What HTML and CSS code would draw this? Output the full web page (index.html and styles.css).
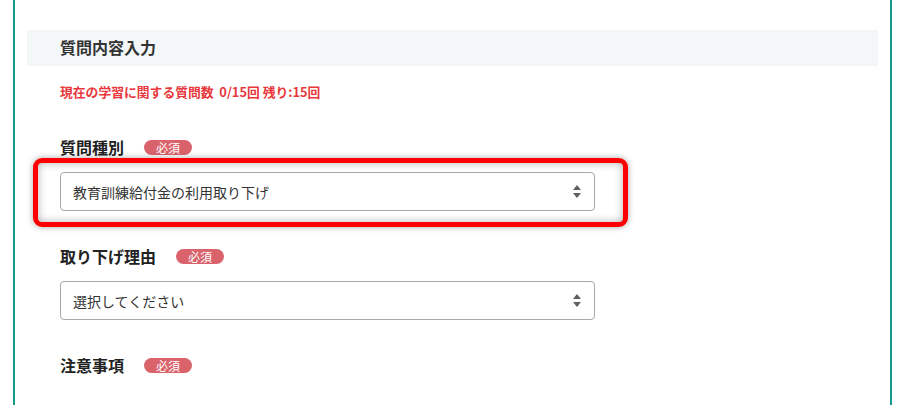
FILE: index.html
```html
<!DOCTYPE html>
<html lang="ja">
<head>
<meta charset="utf-8">
<title>質問内容入力</title>
<link rel="stylesheet" href="styles.css">
</head>
<body>
<div class="panel">
  <div class="section-head">質問内容入力</div>
  <div class="form">
    <p class="count">現在の学習に関する質問数&nbsp;&nbsp;0/15回 残り:15回</p>
    <div class="field">
      <div class="label-row"><span class="label">質問種別</span><span class="badge">必須</span></div>
      <div class="select-wrap">
        <div class="select">教育訓練給付金の利用取り下げ
          <svg class="arrows" width="8" height="13" viewBox="0 0 8 13"><path d="M4 0 L8 5 L0 5 Z" fill="#5f5f5f"/><path d="M0 8 L8 8 L4 13 Z" fill="#5f5f5f"/></svg>
        </div>
        <div class="highlight"></div>
      </div>
    </div>
    <div class="field">
      <div class="label-row"><span class="label">取り下げ理由</span><span class="badge">必須</span></div>
      <div class="select">選択してください
        <svg class="arrows" width="8" height="13" viewBox="0 0 8 13"><path d="M4 0 L8 5 L0 5 Z" fill="#5f5f5f"/><path d="M0 8 L8 8 L4 13 Z" fill="#5f5f5f"/></svg>
      </div>
    </div>
    <div class="field">
      <div class="label-row"><span class="label">注意事項</span><span class="badge">必須</span></div>
    </div>
  </div>
</div>
</body>
</html>
```

FILE: styles.css
```css
html, body {
  margin: 0;
  padding: 0;
  background: #fff;
}
body {
  font-family: "Noto Sans CJK JP", "Noto Sans", sans-serif;
  color: #333;
  height: 405px;
  overflow: hidden;
}
.panel {
  margin-left: 13px;
  width: 879px;
  box-sizing: border-box;
  border-left: 2px solid #14998a;
  border-right: 2px solid #14998a;
  padding: 30px 12px 40px;
  min-height: 460px;
}
.section-head {
  background: #f3f7f8;
  height: 36px;
  line-height: 34px;
  padding-left: 33px;
  font-size: 16px;
  font-weight: bold;
  color: #333;
}
.form {
  padding-left: 33px;
}
.count {
  margin: 16px 0 34px;
  line-height: 20px;
  font-size: 12.8px;
  font-weight: bold;
  color: #e8383d;
}
.field {
  margin-bottom: 34px;
}
.label-row {
  display: flex;
  align-items: center;
  height: 22px;
  margin-bottom: 14px;
}
.label {
  font-size: 16px;
  font-weight: bold;
  color: #222;
}
.badge {
  margin-left: 20px;
  width: 48px;
  height: 15px;
  border-radius: 8px;
  background: #d9626b;
  color: #fff;
  font-size: 12px;
  line-height: 15px;
  text-align: center;
}
.select-wrap {
  position: relative;
}
.select {
  position: relative;
  width: 535px;
  height: 39px;
  box-sizing: border-box;
  border: 1px solid #a8a8a8;
  border-radius: 4px;
  padding-left: 12px;
  display: flex;
  align-items: center;
  font-size: 14px;
  color: #333;
}
.arrows {
  position: absolute;
  right: 13px;
  top: 12px;
}
.highlight {
  position: absolute;
  left: -27px;
  top: -14px;
  width: 595px;
  height: 69px;
  box-sizing: border-box;
  border: 5px solid #ff0000;
  border-radius: 9px;
  box-shadow: 0 0 6px rgba(0,0,0,0.35), inset 0 0 8px rgba(0,0,0,0.3);
}
```
